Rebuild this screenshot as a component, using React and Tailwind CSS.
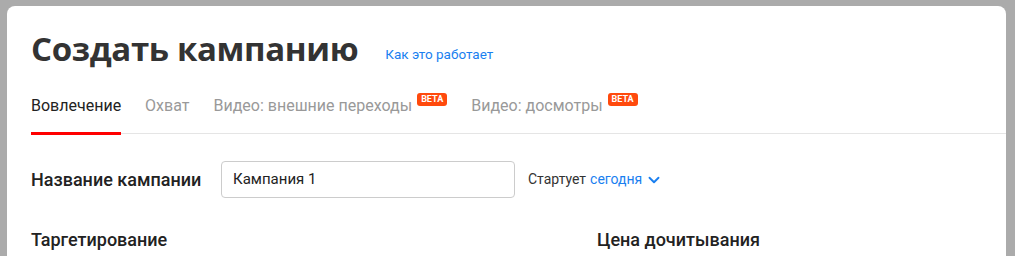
import { ChevronDown } from 'lucide-react';

const tabs = [
  { label: 'Вовлечение', active: true },
  { label: 'Охват' },
  { label: 'Видео: внешние переходы', beta: true },
  { label: 'Видео: досмотры', beta: true },
];

export default function App() {
  return (
    <div className="h-[256px] overflow-hidden bg-[#ababab] pl-[7px] pr-[9px] pt-[6px] font-['Roboto','Liberation_Sans',sans-serif]">
      <div className="h-[300px] rounded-t-[8px] bg-white pl-[24px]">
        <div className="flex items-end pt-[21px]">
          <h1 className="font-['Open_Sans',sans-serif] text-[33px] font-bold leading-[44px] tracking-[-0.35px] text-[#333]">
            Создать кампанию
          </h1>
          <a className="mb-[7px] ml-[27px] text-[13.5px] text-[#1a7ff0]">Как это работает</a>
        </div>

        <div className="mt-[21px] flex h-[42px] gap-[24px] border-b border-[#e5e5e5]">
          {tabs.map(tab => (
            <div key={tab.label} className="relative flex items-start">
              <span className={`text-[16px] leading-[28px] ${tab.active ? 'text-[#222]' : 'text-[#999]'}`}>
                {tab.label}
              </span>
              {tab.beta && (
                <span className="ml-[5px] mt-[1px] rounded-[3px] bg-[#ff4a0d] px-[4px] text-[9px] font-bold leading-[13px] text-white">
                  BETA
                </span>
              )}
              {tab.active && (
                <div className="absolute bottom-[-2px] left-0 right-0 h-[3px] bg-[#f00]" />
              )}
            </div>
          ))}
        </div>

        <div className="mt-[27px] flex items-center">
          <span className="w-[190px] text-[18px] font-medium text-[#222]">Название кампании</span>
          <div className="flex h-[37px] w-[294px] items-center rounded-[4px] border border-[#ccc] px-[11px] text-[15px] text-[#222]">
            Кампания 1
          </div>
          <span className="ml-[13px] text-[14px] text-[#333]">Стартует</span>
          <span className="ml-[4px] text-[14px] text-[#1a7ff0]">сегодня</span>
          <ChevronDown className="ml-[3px] h-[18px] w-[18px] text-[#1a7ff0]" strokeWidth={2.5} />
        </div>

        <div className="mt-[28px] flex text-[18px] font-medium text-[#222]">
          <span className="w-[566px]">Таргетирование</span>
          <span>Цена дочитывания</span>
        </div>
      </div>
    </div>
  );
}
